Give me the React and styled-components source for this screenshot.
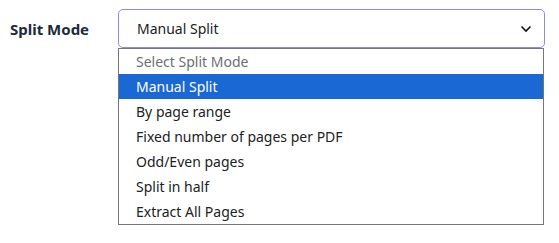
import React from "react";
import styled, { createGlobalStyle } from "styled-components";

const Global = createGlobalStyle`
  html, body { margin: 0; padding: 0; background: #fff; }
  body { font-family: "Noto Sans", sans-serif; }
`;

const Page = styled.div`
  width: 559px;
  height: 243px;
  display: flex;
  align-items: flex-start;
  padding: 9px 0 0 10px;
  box-sizing: border-box;
`;

const Label = styled.div`
  width: 108px;
  flex: none;
  padding-top: 10px;
  font-size: 15px;
  font-weight: 700;
  color: #1e2a3b;
  line-height: 20px;
`;

const Field = styled.div`
  width: 427px;
  display: flex;
  flex-direction: column;
`;

const SelectBox = styled.div`
  height: 39px;
  box-sizing: border-box;
  border: 1px solid #8a8cf2;
  border-radius: 5px;
  display: flex;
  align-items: center;
  justify-content: space-between;
  padding: 0 12px 0 18px;
  font-size: 14px;
  color: #222;
`;

const List = styled.ul`
  list-style: none;
  margin: 0 1px 0 0;
  padding: 0;
  border: 1px solid #767676;
`;

const Option = styled.li`
  height: 25px;
  line-height: 25px;
  padding-left: 17px;
  font-size: 14px;
  color: ${(p) => (p.$placeholder ? "#6f6f6f" : p.$active ? "#fff" : "#222")};
  background: ${(p) => (p.$active ? "#1a68d4" : "transparent")};
`;

const options = [
  "Manual Split",
  "By page range",
  "Fixed number of pages per PDF",
  "Odd/Even pages",
  "Split in half",
  "Extract All Pages",
];

export default function App() {
  return (
    <>
      <Global />
      <Page>
        <Label>Split Mode</Label>
        <Field>
          <SelectBox>
            <span>Manual Split</span>
            <svg width="12" height="8" viewBox="0 0 12 8" fill="none">
              <path d="M1.5 1.5 L6 6 L10.5 1.5" stroke="#111" strokeWidth="1.6" />
            </svg>
          </SelectBox>
          <List>
            <Option $placeholder>Select Split Mode</Option>
            {options.map((o, i) => (
              <Option key={o} $active={i === 0}>
                {o}
              </Option>
            ))}
          </List>
        </Field>
      </Page>
    </>
  );
}
